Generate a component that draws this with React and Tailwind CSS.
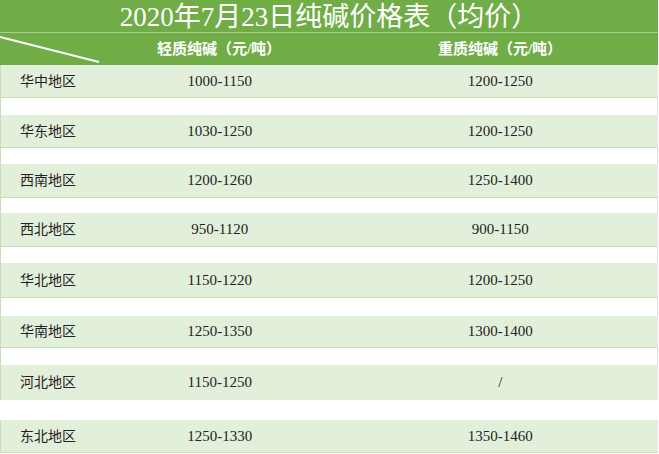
const rows = [
  { name: "华中地区", light: "1000-1150", heavy: "1200-1250", h: "h-[33px]", gap: "h-[17px]" },
  { name: "华东地区", light: "1030-1250", heavy: "1200-1250", h: "h-[33px]", gap: "h-[16px]" },
  { name: "西南地区", light: "1200-1260", heavy: "1250-1400", h: "h-[34px]", gap: "h-[15px]" },
  { name: "西北地区", light: "950-1120", heavy: "900-1150", h: "h-[34px]", gap: "h-[16px]" },
  { name: "华北地区", light: "1150-1220", heavy: "1200-1250", h: "h-[35px]", gap: "h-[18px]" },
  { name: "华南地区", light: "1250-1350", heavy: "1300-1400", h: "h-[32px]", gap: "h-[17px]" },
  { name: "河北地区", light: "1150-1250", heavy: "/", h: "h-[35px]", gap: "h-[20px]" },
  { name: "东北地区", light: "1250-1330", heavy: "1350-1460", h: "h-[33px]", gap: "" },
];

const font = { fontFamily: '"Liberation Serif", "Noto Sans CJK SC", serif' };

export default function App() {
  return (
    <div className="w-[659px] h-[454px] bg-white overflow-hidden" style={font}>
      {/* 标题 */}
      <div className="w-[658px] h-[32px] bg-[#70ad47] flex items-center justify-center pt-[2px] text-white text-[27px] leading-none">
        2020年7月23日纯碱价格表（均价）
      </div>
      <div className="w-[658px] h-[1px] bg-[#a9d08e]" />

      {/* 表头 */}
      <div className="relative w-[658px] h-[32px] bg-[#70ad47] flex items-center text-white text-[15px] font-bold">
        <svg className="absolute left-0 top-0" width="110" height="32" viewBox="0 0 110 32">
          <line x1="0" y1="4" x2="99" y2="29" stroke="#ffffff" strokeWidth="2" />
        </svg>
        <div className="w-[96px]" />
        <div className="w-[246px] text-center">轻质纯碱（元/吨）</div>
        <div className="w-[316px] text-center">重质纯碱（元/吨）</div>
      </div>

      {/* 数据 */}
      {rows.map((r, i) => (
        <div key={r.name}>
          <div
            className={`w-[658px] ${r.h} bg-[#e2efda] flex items-center text-[15px] text-[#222] border-l border-[#c6e0b4] ${
              i === 6 ? "" : "border-b border-b-[#c6e0b4]"
            }`}
          >
            <div className="w-[96px] pl-[19px] text-[14px]">{r.name}</div>
            <div className="w-[246px] text-center">{r.light}</div>
            <div className="w-[316px] text-center">{r.heavy}</div>
          </div>
          {r.gap && (
            <div
              className={`w-[658px] ${r.gap} bg-white ${
                i === 6 ? "" : "border-l border-[#c6e0b4] border-r border-r-[#e0e0e0]"
              }`}
            />
          )}
        </div>
      ))}
    </div>
  );
}
